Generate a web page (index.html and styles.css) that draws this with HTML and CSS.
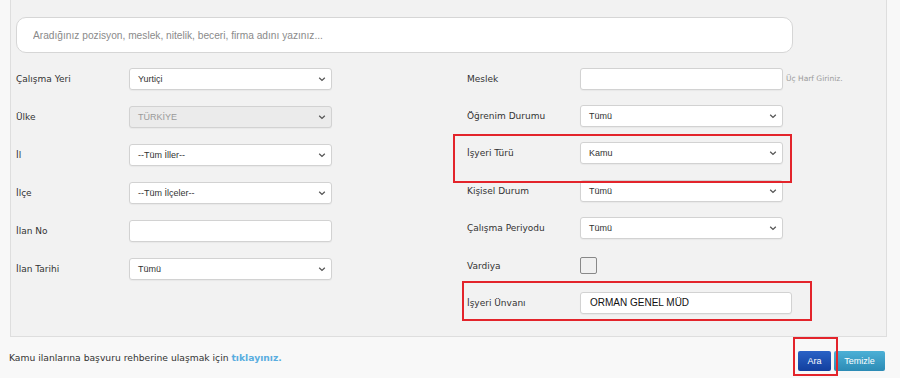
FILE: index.html
```html
<!DOCTYPE html>
<html lang="tr">
<head>
  <meta charset="UTF-8" />
  <title>İş İlanı Arama</title>
  <meta name="viewport" content="width=device-width, initial-scale=1.0" />
  <link rel="stylesheet" href="styles.css">
</head>
<body>
  <div class="page">
    <div class="panel">
      <div class="search">
        <input type="text" placeholder="Aradığınız pozisyon, meslek, nitelik, beceri, firma adını yazınız...">
      </div>

      <div class="form-grid">
        <div class="col col-left">
          <div class="row">
            <label>Çalışma Yeri</label>
            <div class="field select">Yurtiçi</div>
          </div>
          <div class="row">
            <label>Ülke</label>
            <div class="field select disabled">TÜRKİYE</div>
          </div>
          <div class="row">
            <label>İl</label>
            <div class="field select">--Tüm İller--</div>
          </div>
          <div class="row">
            <label>İlçe</label>
            <div class="field select">--Tüm İlçeler--</div>
          </div>
          <div class="row">
            <label>İlan No</label>
            <div class="field"></div>
          </div>
          <div class="row">
            <label>İlan Tarihi</label>
            <div class="field select">Tümü</div>
          </div>
        </div>

        <div class="col col-right">
          <div class="row">
            <label>Meslek</label>
            <div class="field"></div>
            <span class="hint">Üç Harf Giriniz.</span>
          </div>
          <div class="row">
            <label>Öğrenim Durumu</label>
            <div class="field select">Tümü</div>
          </div>
          <div class="row">
            <label>İşyeri Türü</label>
            <div class="field select">Kamu</div>
          </div>
          <div class="row">
            <label>Kişisel Durum</label>
            <div class="field select">Tümü</div>
          </div>
          <div class="row">
            <label>Çalışma Periyodu</label>
            <div class="field select">Tümü</div>
          </div>
          <div class="row">
            <label>Vardiya</label>
            <span class="checkbox"></span>
          </div>
          <div class="row">
            <label>İşyeri Ünvanı</label>
            <div class="field wide">ORMAN GENEL MÜD</div>
          </div>
        </div>
      </div>
    </div>

    <div class="footer">
      <p>Kamu ilanlarına başvuru rehberine ulaşmak için <a href="#">tıklayınız.</a></p>
      <div class="actions">
        <button class="btn btn-search">Ara</button>
        <button class="btn btn-clear">Temizle</button>
      </div>
    </div>
  </div>

  <!-- annotation boxes drawn over the screenshot -->
  <div class="mark mark-type"></div>
  <div class="mark mark-title"></div>
  <div class="mark mark-button"></div>
</body>
</html>
```

FILE: styles.css
```css
* {
  box-sizing: border-box;
}

html, body {
  margin: 0;
  padding: 0;
  width: 100%;
  height: 100%;
  background: #f8f8f8;
  font-family: 'DejaVu Sans', Verdana, sans-serif;
  color: #333;
  overflow: hidden;
}

body {
  position: relative;
}

.page {
  width: 900px;
}

.panel {
  margin: 0 13px 0 10px;
  background: #f2f2f2;
  border: 1px solid #dedede;
  border-top: none;
  padding: 17px 5px 14px;
}

.search input {
  display: block;
  width: 777px;
  height: 36px;
  border: 1px solid #d6d6d6;
  border-radius: 10px;
  background: #fff;
  padding: 0 16px;
  font-family: 'Liberation Sans', Arial, sans-serif;
  font-size: 10.2px;
  outline: none;
}

.search input::placeholder {
  color: #8a8a8a;
}

.form-grid {
  display: grid;
  grid-template-columns: 451px 1fr;
  margin-top: 7px;
}

.row {
  display: flex;
  align-items: center;
  height: 38px;
}

.col-right .row {
  height: 37.4px;
}

.row label {
  width: 113px;
  flex: none;
  font-size: 9px;
  color: #333;
}

.field {
  width: 203px;
  height: 22px;
  flex: none;
  background: #fff;
  border: 1px solid #d2d2d2;
  border-radius: 3px;
  box-shadow: 0 1px 1px rgba(0, 0, 0, 0.04);
  padding: 0 8px;
  font-family: 'Liberation Sans', Arial, sans-serif;
  font-size: 9px;
  line-height: 20px;
  color: #333;
}

.field.select {
  background-image: url("data:image/svg+xml;utf8,<svg xmlns='http://www.w3.org/2000/svg' width='8' height='6' viewBox='0 0 8 6'><path d='M1.2 1.8 L4 4.4 L6.8 1.8' fill='none' stroke='%23555' stroke-width='1.3'/></svg>");
  background-repeat: no-repeat;
  background-position: right 5px center;
}

.field.disabled {
  background-color: #ebebeb;
  color: #9a9a9a;
}

.field.wide {
  width: 212px;
  font-size: 10px;
  padding: 0 9px;
  color: #111;
}

.hint {
  margin-left: 3px;
  font-size: 7.5px;
  color: #9a9a9a;
}

.checkbox {
  width: 17px;
  height: 17px;
  border: 1px solid #888;
  border-radius: 2px;
  background: #f0f0f0;
}

.footer {
  display: flex;
  align-items: center;
  justify-content: space-between;
  height: 44px;
  padding: 0 15px 0 9px;
}

.footer p {
  margin: 0 0 3px;
  font-size: 9.2px;
  color: #333;
}

.footer a {
  color: #5aaee0;
  font-weight: bold;
  text-decoration: none;
}

.actions {
  display: flex;
  gap: 3px;
  margin-top: 5px;
}

.btn {
  height: 20px;
  border: none;
  border-radius: 2px;
  color: #fff;
  font-family: 'Liberation Sans', Arial, sans-serif;
  font-size: 9px;
  padding: 0;
  cursor: pointer;
}

.btn-search {
  width: 33px;
  background: linear-gradient(#2a62c6, #123f9e);
}

.btn-clear {
  width: 51px;
  background: linear-gradient(#4cb0d6, #2c8bb5);
}

.mark {
  position: absolute;
  border: 2px solid #e3242b;
}

.mark-type {
  left: 453px;
  top: 134px;
  width: 339px;
  height: 49px;
}

.mark-title {
  left: 462px;
  top: 281px;
  width: 350px;
  height: 40px;
}

.mark-button {
  left: 793px;
  top: 337px;
  width: 45px;
  height: 39px;
}
```
